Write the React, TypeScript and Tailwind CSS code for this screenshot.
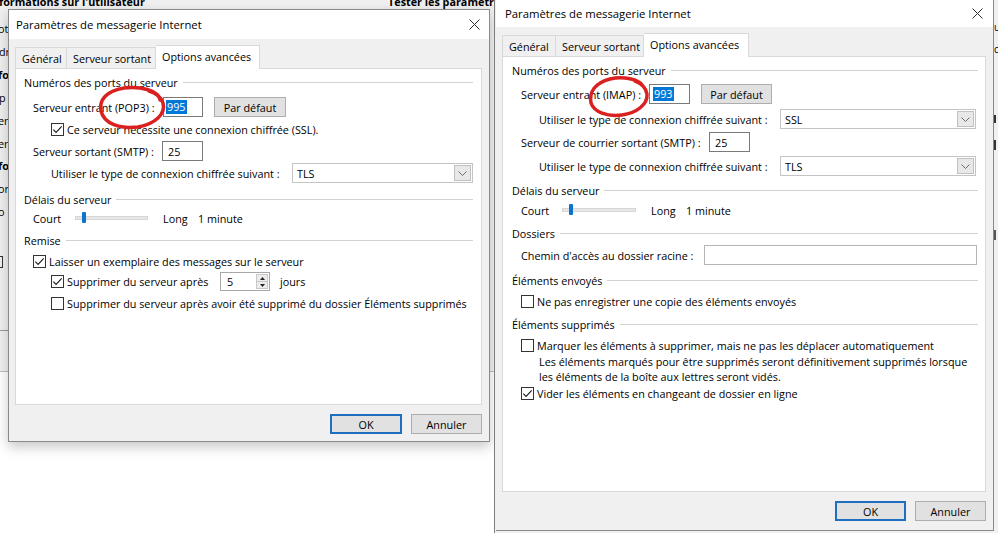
import React from "react";

const Check = ({ checked = false }: { checked?: boolean }) => (
  <div className="flex h-[13px] w-[13px] shrink-0 items-center justify-center border border-[#333333] bg-white">
    {checked && (
      <svg width="11" height="11" viewBox="0 0 11 11">
        <path d="M1.3 5.6 L4.1 8.4 L9.7 2.4" fill="none" stroke="#1a1a1a" strokeWidth="1.1" />
      </svg>
    )}
  </div>
);

const Group = ({ label, className = "" }: { label: string; className?: string }) => (
  <div className={`flex h-[16px] items-center gap-[5px] ${className}`}>
    <span className="whitespace-nowrap">{label}</span>
    <div className="h-px flex-1 bg-[#d2d2d2]" />
  </div>
);

const Chevron = () => (
  <svg width="9" height="5" viewBox="0 0 9 5">
    <path d="M0.5 0.5 L4.5 4.5 L8.5 0.5" fill="none" stroke="#6b6b6b" strokeWidth="1" />
  </svg>
);

const Select = ({ value, w }: { value: string; w: string }) => (
  <div className={`flex h-[20px] ${w} items-center border border-[#c4c4c4] bg-white pl-[4px] pr-[1px]`}>
    <span className="flex-1">{value}</span>
    <div className="flex h-[16px] w-[17px] items-center justify-center border border-[#c0c0c0] bg-[#e8e8e8]">
      <Chevron />
    </div>
  </div>
);

const CloseX = () => (
  <svg width="11" height="11" viewBox="0 0 11 11">
    <path d="M0.5 0.5 L10.5 10.5 M10.5 0.5 L0.5 10.5" stroke="#2b2b2b" strokeWidth="1" />
  </svg>
);

const Btn = ({ children, w, def = false }: { children: React.ReactNode; w: string; def?: boolean }) => (
  <div
    className={`flex h-[20px] ${w} items-center justify-center bg-[#e1e1e1] ${
      def ? "border-2 border-[#1e6fc0]" : "border border-[#adadad]"
    }`}
  >
    {children}
  </div>
);

const Tabs = ({ w1, w2, w3 }: { w1: string; w2: string; w3: string }) => (
  <div className="flex h-[23px] items-end">
    <div className={`flex h-[21px] ${w1} items-center border border-b-0 border-[#d9d9d9] bg-[#f0f0f0] pl-[6px]`}>
      Général
    </div>
    <div className={`flex h-[21px] ${w2} items-center border border-b-0 border-l-0 border-[#d9d9d9] bg-[#f0f0f0] pl-[6px]`}>
      Serveur sortant
    </div>
    <div
      className={`relative z-10 -mb-px flex h-[24px] ${w3} items-start border border-b-0 border-l-0 border-[#d9d9d9] bg-white pl-[6px] pt-[3px]`}
    >
      Options avancées
    </div>
  </div>
);

const Slider = ({ w }: { w: string }) => (
  <div className={`relative h-[4px] ${w} border border-[#d6d6d6] bg-[#e7e7e7]`}>
    <div className="absolute left-[6px] top-[-5px] h-[11px] w-[4px] rounded-[1px] bg-[#0a74d0]" />
  </div>
);

function LeftShot() {
  return (
    <div className="relative h-[533px] w-[495px] shrink-0 overflow-hidden border-r border-[#7d7d7d] bg-white">
      {/* background window behind */}
      <div className="absolute left-0 top-0 h-[372px] w-[494px] border-b border-[#bdbdbd] bg-[#f0f0f0]">
        <span className="absolute left-[-1px] top-[-6px] font-bold whitespace-nowrap">formations sur l'utilisateur</span>
        <span className="absolute left-[388px] top-[-6px] font-bold whitespace-nowrap">Tester les paramètres</span>
        <span className="absolute left-[-2px] top-[21px]">ot</span>
        <span className="absolute left-[-1px] top-[44px]">dr</span>
        <span className="absolute left-[-2px] top-[67px] font-bold">fo</span>
        <span className="absolute left-[-1px] top-[90px]">p</span>
        <span className="absolute left-[-2px] top-[113px]">en</span>
        <span className="absolute left-[-2px] top-[136px]">en</span>
        <span className="absolute left-[-2px] top-[158px] font-bold">fo</span>
        <span className="absolute left-[-2px] top-[181px]">or</span>
        <span className="absolute left-[-2px] top-[204px]">o</span>
        <div className="absolute left-[-8px] top-[256px] h-[12px] w-[11px] border border-[#333]" />
        <div className="absolute left-0 top-[330px] h-px w-[10px] bg-[#9a9a9a]" />
      </div>

      <div className="relative z-10 ml-[8px] mt-[9px] flex h-[433px] w-[482px] flex-col border border-[#8a8a8a] bg-[#f0f0f0] shadow-[0_5px_12px_rgba(0,0,0,0.22)]">
        <div className="flex h-[29px] items-center justify-between bg-white pl-[7px] pr-[9px] text-[11.3px]">
          <span>Paramètres de messagerie Internet</span>
          <CloseX />
        </div>
        <div className="flex flex-1 flex-col pl-[6px] pr-[7px] pt-[6px]">
          <Tabs w1="w-[52px]" w2="w-[89px]" w3="w-[104px]" />
          <div className="flex h-[337px] flex-col border border-[#d9d9d9] bg-white pl-[8px] pr-[8px] pt-[5px]">
            <Group label="Numéros des ports du serveur" />
            <div className="mt-[7px] flex h-[20px] items-center pl-[9px]">
              <span className="w-[130px] whitespace-nowrap">Serveur entrant (POP3) :</span>
              <div className="flex h-[20px] w-[40px] items-center border border-[#7a7a7a] bg-white pl-[2px]">
                <span className="bg-[#0078d7] px-px leading-[14px] text-white">995</span>
              </div>
              <div className="ml-[11px]">
                <Btn w="w-[72px]">Par défaut</Btn>
              </div>
            </div>
            <div className="mt-[4px] flex h-[16px] items-center gap-[3px] pl-[27px]">
              <Check checked />
              <span>Ce serveur nécessite une connexion chiffrée (SSL).</span>
            </div>
            <div className="mt-[4px] flex h-[20px] items-center pl-[9px]">
              <span className="w-[129px] whitespace-nowrap">Serveur sortant (SMTP) :</span>
              <div className="flex h-[20px] w-[41px] items-center border border-[#7a7a7a] bg-white pl-[5px]">25</div>
            </div>
            <div className="mt-[2px] flex h-[20px] items-center pl-[27px]">
              <span className="w-[241px] whitespace-nowrap">Utiliser le type de connexion chiffrée suivant :</span>
              <Select value="TLS" w="w-[181px]" />
            </div>
            <Group label="Délais du serveur" className="mt-[8px]" />
            <div className="mt-[3px] flex h-[16px] items-center pl-[9px]">
              <span className="w-[42px]">Court</span>
              <Slider w="w-[73px]" />
              <span className="ml-[15px] w-[35px]">Long</span>
              <span>1 minute</span>
            </div>
            <Group label="Remise" className="mt-[6px]" />
            <div className="mt-[5px] flex h-[16px] items-center gap-[3px] pl-[9px]">
              <Check checked />
              <span>Laisser un exemplaire des messages sur le serveur</span>
            </div>
            <div className="mt-[3px] flex h-[19px] items-center pl-[27px]">
              <Check checked />
              <span className="ml-[3px] w-[153px]">Supprimer du serveur après</span>
              <div className="flex h-[19px] w-[50px] items-center border border-[#a8a8a8] bg-white">
                <span className="flex-1 pl-[6px]">5</span>
                <div className="mr-px flex h-[15px] w-[12px] flex-col border border-[#c8c8c8] bg-[#ececec]">
                  <div className="flex flex-1 items-center justify-center border-b border-[#c8c8c8]">
                    <svg width="5" height="3" viewBox="0 0 5 3"><path d="M0 3 L2.5 0 L5 3Z" fill="#222" /></svg>
                  </div>
                  <div className="flex flex-1 items-center justify-center">
                    <svg width="5" height="3" viewBox="0 0 5 3"><path d="M0 0 L2.5 3 L5 0Z" fill="#222" /></svg>
                  </div>
                </div>
              </div>
              <span className="ml-[10px]">jours</span>
            </div>
            <div className="mt-[4px] flex h-[16px] items-center gap-[3px] pl-[27px]">
              <Check />
              <span className="whitespace-nowrap">Supprimer du serveur après avoir été supprimé du dossier Éléments supprimés</span>
            </div>
          </div>
          <div className="mt-[9px] flex justify-end gap-[9px]">
            <Btn w="w-[72px]" def>
              OK
            </Btn>
            <Btn w="w-[71px]">Annuler</Btn>
          </div>
        </div>
      </div>

      <svg className="pointer-events-none absolute left-0 top-0 z-20" width="495" height="533">
        <path
          d="M160 100 C 158 90, 140 86, 124 88 C 106 91, 99 100, 101 111 C 104 124, 120 129, 138 127 C 155 124, 166 114, 163 103 C 161 97, 156 93, 149 91"
          fill="none"
          stroke="#db2020"
          strokeWidth="3.5"
          strokeLinecap="round"
        />
      </svg>
    </div>
  );
}

function RightShot() {
  return (
    <div className="relative flex h-[533px] flex-1 overflow-hidden bg-[#f0f0f0]">
      <div className="ml-px flex h-[531px] w-[498px] flex-col border-b border-r border-[#8a8a8a] bg-[#f0f0f0]">
        <div className="flex h-[27px] items-center justify-between bg-white pl-[9px] pr-[10px] text-[11.3px]">
          <span>Paramètres de messagerie Internet</span>
          <CloseX />
        </div>
        <div className="flex flex-1 flex-col pl-[6px] pr-[7px] pt-[6px]">
          <Tabs w1="w-[54px]" w2="w-[88px]" w3="w-[105px]" />
          <div className="flex h-[436px] flex-col border border-[#d9d9d9] bg-white pl-[9px] pr-[7px] pt-[5px]">
            <Group label="Numéros des ports du serveur" />
            <div className="mt-[6px] flex h-[20px] items-center pl-[9px]">
              <span className="w-[128px] whitespace-nowrap">Serveur entrant (IMAP) :</span>
              <div className="flex h-[20px] w-[41px] items-center border border-[#7a7a7a] bg-white pl-[3px]">
                <span className="bg-[#0078d7] px-px leading-[14px] text-white">993</span>
              </div>
              <div className="ml-[11px]">
                <Btn w="w-[71px]">Par défaut</Btn>
              </div>
            </div>
            <div className="mt-[5px] flex h-[20px] items-center pl-[27px]">
              <span className="w-[241px] whitespace-nowrap">Utiliser le type de connexion chiffrée suivant :</span>
              <Select value="SSL" w="w-[196px]" />
            </div>
            <div className="mt-[3px] flex h-[20px] items-center pl-[9px]">
              <span className="w-[188px] whitespace-nowrap">Serveur de courrier sortant (SMTP) :</span>
              <div className="flex h-[20px] w-[41px] items-center border border-[#7a7a7a] bg-white pl-[5px]">25</div>
            </div>
            <div className="mt-[4px] flex h-[20px] items-center pl-[27px]">
              <span className="w-[241px] whitespace-nowrap">Utiliser le type de connexion chiffrée suivant :</span>
              <Select value="TLS" w="w-[196px]" />
            </div>
            <Group label="Délais du serveur" className="mt-[6px]" />
            <div className="mt-[4px] flex h-[16px] items-center pl-[9px]">
              <span className="w-[41px]">Court</span>
              <Slider w="w-[74px]" />
              <span className="ml-[15px] w-[35px]">Long</span>
              <span>1 minute</span>
            </div>
            <Group label="Dossiers" className="mt-[7px]" />
            <div className="mt-[4px] flex h-[20px] items-center pl-[9px] pr-[1px]">
              <span className="w-[183px] whitespace-nowrap">Chemin d'accès au dossier racine :</span>
              <div className="h-[20px] flex-1 border border-[#b5b5b5] bg-white" />
            </div>
            <Group label="Éléments envoyés" className="mt-[7px]" />
            <div className="mt-[5px] flex h-[16px] items-center gap-[3px] pl-[9px]">
              <Check />
              <span>Ne pas enregistrer une copie des éléments envoyés</span>
            </div>
            <Group label="Éléments supprimés" className="mt-[7px]" />
            <div className="mt-[5px] flex h-[16px] items-center gap-[3px] pl-[9px]">
              <Check />
              <span>Marquer les éléments à supprimer, mais ne pas les déplacer automatiquement</span>
            </div>
            <div className="mt-px pl-[27px] leading-[15px]">
              <div className="whitespace-nowrap">Les éléments marqués pour être supprimés seront définitivement supprimés lorsque</div>
              <div>les éléments de la boîte aux lettres seront vidés.</div>
            </div>
            <div className="mt-px flex h-[16px] items-center gap-[3px] pl-[9px]">
              <Check checked />
              <span>Vider les éléments en changeant de dossier en ligne</span>
            </div>
          </div>
          <div className="mt-[9px] flex justify-end gap-[9px]">
            <Btn w="w-[71px]" def>
              OK
            </Btn>
            <Btn w="w-[71px]">Annuler</Btn>
          </div>
        </div>
      </div>
      <div className="relative w-[4px] shrink-0 bg-[#f0f0f0]">
        <span className="absolute left-[0px] top-[20px] text-[10px]">u</span>
        <span className="absolute left-[0px] top-[42px] text-[10px]">c</span>
        <div className="absolute left-0 top-[115px] h-[8px] w-[2px] bg-[#333]" />
        <div className="absolute left-0 top-[140px] h-[10px] w-[2px] bg-[#333]" />
        <div className="absolute left-0 top-[230px] h-[10px] w-[2px] bg-[#555]" />
      </div>

      <svg className="pointer-events-none absolute left-0 top-0 z-20" width="503" height="533">
        <path
          d="M148 86 C 144 79, 128 76, 115 79 C 100 83, 94 92, 96 103 C 99 112, 112 117, 127 115 C 142 113, 153 104, 152 94 C 151 88, 146 83, 140 81"
          fill="none"
          stroke="#db2020"
          strokeWidth="3.5"
          strokeLinecap="round"
        />
      </svg>
    </div>
  );
}

export default function App() {
  return (
    <div className="flex h-[533px] w-[998px] overflow-hidden bg-white font-['Open_Sans','Noto_Sans',sans-serif] text-[10.8px] leading-[15px] text-black">
      <LeftShot />
      <RightShot />
    </div>
  );
}
